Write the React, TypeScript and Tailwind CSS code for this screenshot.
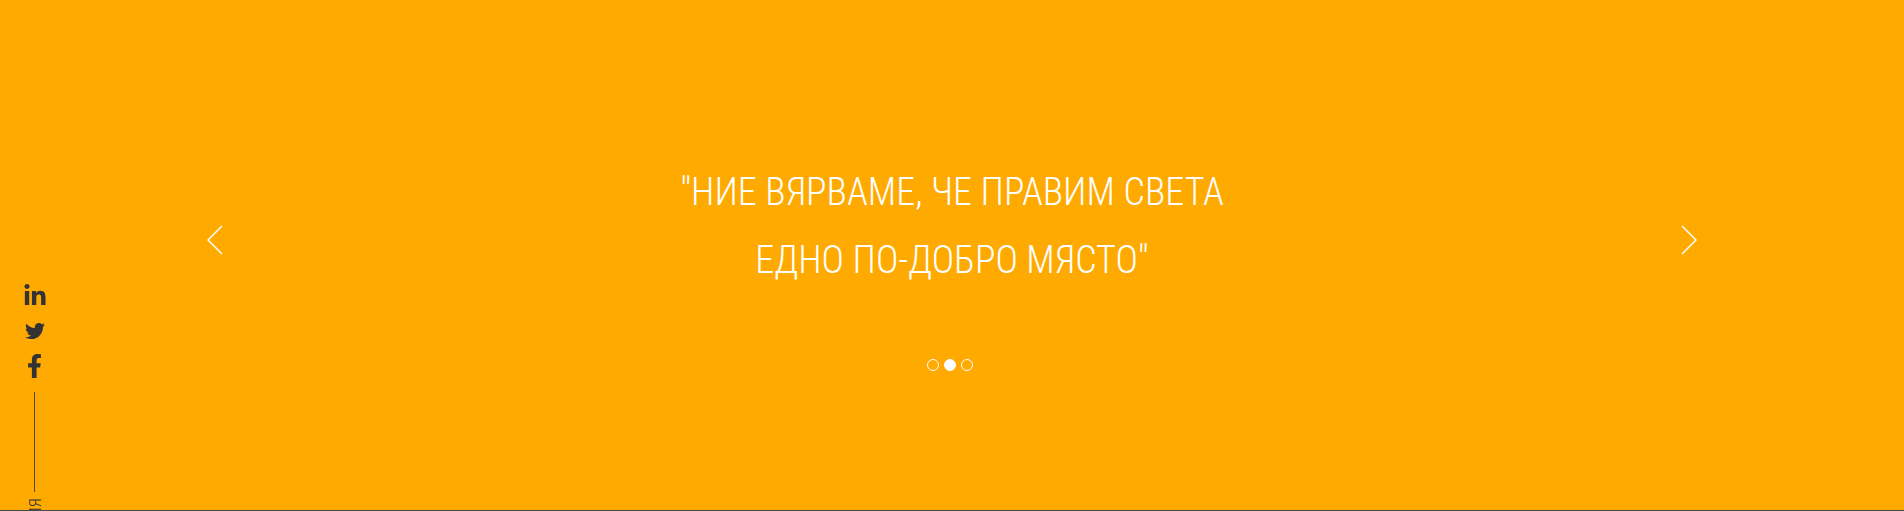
import type { ReactNode } from "react";

const socials: { label: string; href: string; icon: ReactNode }[] = [
  {
    label: "LinkedIn",
    href: "#linkedin",
    icon: (
      <svg viewBox="0 0 448 512" className="h-6 w-[22px]" fill="currentColor" aria-hidden="true">
        <path d="M100.28 448H7.4V148.9h92.88zM53.79 108.1C24.09 108.1 0 83.5 0 53.8a53.79 53.79 0 0 1 107.58 0c0 29.7-24.1 54.3-53.79 54.3zM447.9 448h-92.68V302.4c0-34.7-.7-79.2-48.29-79.2-48.29 0-55.69 37.7-55.69 76.7V448h-92.78V148.9h89.08v40.8h1.3c12.4-23.5 42.69-48.3 87.88-48.3 94 0 111.28 61.9 111.28 142.3V448z" />
      </svg>
    ),
  },
  {
    label: "Twitter",
    href: "#twitter",
    icon: (
      <svg viewBox="0 0 512 512" className="h-5 w-5" fill="currentColor" aria-hidden="true">
        <path d="M459.37 151.716c.325 4.548.325 9.097.325 13.645 0 138.72-105.583 298.558-298.558 298.558-59.452 0-114.68-17.219-161.137-47.106 8.447.974 16.568 1.299 25.34 1.299 49.055 0 94.213-16.568 130.274-44.832-46.132-.975-84.792-31.188-98.112-72.772 6.498.974 12.995 1.624 19.818 1.624 9.421 0 18.843-1.3 27.614-3.573-48.081-9.747-84.143-51.98-84.143-102.985v-1.299c13.969 7.797 30.214 12.67 47.431 13.319-28.264-18.843-46.781-51.005-46.781-87.391 0-19.492 5.197-37.36 14.294-52.954 51.655 63.675 129.3 105.258 216.365 109.807-1.624-7.797-2.599-15.918-2.599-24.04 0-57.828 46.782-104.934 104.934-104.934 30.213 0 57.502 12.67 76.67 33.137 23.715-4.548 46.456-13.32 66.599-25.34-7.798 24.366-24.366 44.833-46.132 57.827 21.117-2.273 41.584-8.122 60.426-16.243-14.292 20.791-32.161 39.308-52.628 54.253z" />
      </svg>
    ),
  },
  {
    label: "Facebook",
    href: "#facebook",
    icon: (
      <svg viewBox="0 0 320 512" className="h-6 w-[15px]" fill="currentColor" aria-hidden="true">
        <path d="M279.14 288l14.22-92.66h-88.91v-60.13c0-25.35 12.42-50.06 52.24-50.06h40.42V6.26S260.43 0 225.36 0c-73.22 0-121.08 44.38-121.08 124.72v70.62H22.89V288h81.39v224h100.17V288z" />
      </svg>
    ),
  },
];

function Arrow({ label, points }: { label: string; points: string }) {
  return (
    <button type="button" aria-label={label} className="mt-7 flex h-12 w-8 items-center justify-center">
      <svg viewBox="0 0 16 30" className="h-[30px] w-4" fill="none" stroke="currentColor" strokeWidth="1.5" aria-hidden="true">
        <polyline points={points} />
      </svg>
    </button>
  );
}

export default function App() {
  return (
    <section className="relative flex h-screen flex-col overflow-hidden border-b border-[#4a4a4a] bg-[#ffaa00] font-['Roboto_Condensed','Noto_Sans',sans-serif] text-white">
      <div className="flex items-center justify-between px-[199px] pt-[158px]">
        <Arrow label="Предишен" points="15,1 1,15 15,29" />
        <blockquote className="max-w-[600px] text-center text-[38px] font-light leading-[68px]">
          "НИЕ ВЯРВАМЕ, ЧЕ ПРАВИМ СВЕТА ЕДНО ПО-ДОБРО МЯСТО"
        </blockquote>
        <Arrow label="Следващ" points="1,1 15,15 1,29" />
      </div>
      <div className="mt-16 flex justify-center gap-[5px] pr-1 pt-px">
        <button type="button" aria-label="Цитат 1" className="h-3 w-3 rounded-full border border-white" />
        <button type="button" aria-label="Цитат 2" className="h-3 w-3 rounded-full border border-white bg-white" />
        <button type="button" aria-label="Цитат 3" className="h-3 w-3 rounded-full border border-white" />
      </div>
      <aside className="absolute left-5 top-[284px] flex w-[29px] flex-col items-center text-[#333333]">
        <div className="flex flex-col items-center gap-[11px]">
          {socials.map((s) => (
            <a key={s.label} href={s.href} aria-label={s.label} className="flex h-6 items-center">
              {s.icon}
            </a>
          ))}
        </div>
        <div className="mt-[14px] h-[100px] w-px bg-[#4a4a33]" />
        <span className="mt-[6px] rotate-180 text-[17px] font-light leading-5 [writing-mode:vertical-rl]">БЪЛГАРИЯ</span>
      </aside>
    </section>
  );
}
